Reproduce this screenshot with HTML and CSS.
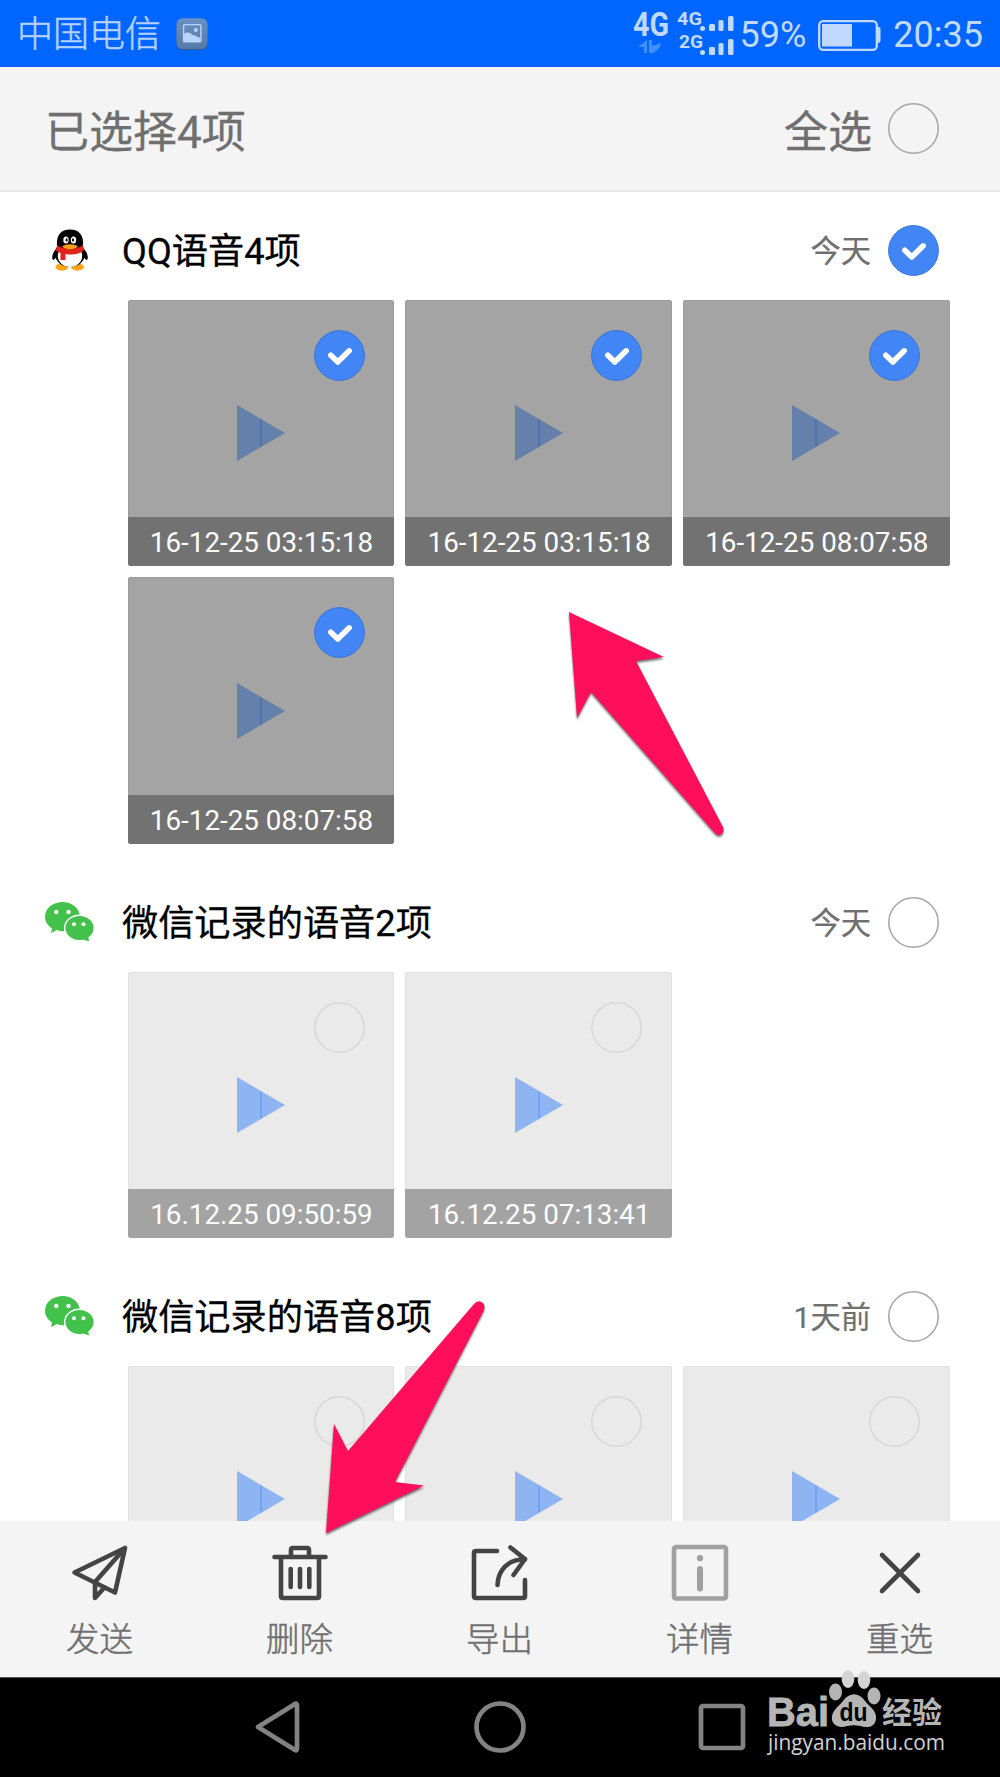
FILE: index.html
```html
<!DOCTYPE html>
<html lang="zh-CN">
<head>
<meta charset="utf-8">
<meta name="viewport" content="width=device-width">
<title>已选择4项</title>
<link rel="stylesheet" href="styles.css">
</head>
<body>
<svg class="defs" width="0" height="0">
  <symbol id="play" viewBox="0 0 48 56"><path d="M0 0L48 28L0 56Z"/><path class="play-line" d="M24 14.5V41.5"/></symbol>
  <symbol id="ring" viewBox="0 0 51 51"><circle class="ring-line" cx="25.5" cy="25.5" r="24.7"/></symbol>
  <symbol id="checked" viewBox="0 0 51 51"><circle class="disc" cx="25.5" cy="25.5" r="24.9"/><path class="tick" d="M16.8 25.2L23.8 32L35.2 20.8"/></symbol>
  <symbol id="wechat" viewBox="0 0 50 50">
    <path d="M18 5C7.500 5 0 11.500 0 20C0 25 3 28.500 7 31.500L6 36L12 33C15 34.500 18 34.500 21 34L35 18C33 10 26 5 18 5Z"/>
    <ellipse class="rim" cx="34.500" cy="31" rx="14.800" ry="12.700"/>
    <path d="M37 42L44 44.500L43 39Z"/>
    <g fill="#fff"><circle cx="11.300" cy="15" r="2.200"/><circle cx="23.500" cy="15" r="2.200"/><circle cx="29" cy="27.200" r="2"/><circle cx="38.500" cy="27.200" r="2"/></g>
  </symbol>
</svg>
<div class="screen">
  <div class="status">
    <span class="carrier">中国电信</span>
    <svg class="shot" viewBox="0 0 32 32"><defs><linearGradient id="tile" x2="0" y2="1"><stop stop-color="#6a91c4"/><stop offset="1" stop-color="#557aa8"/></linearGradient></defs><rect x=".5" y="1" width="31" height="31" rx="6" fill="#365d91"/><rect x=".5" y=".3" width="31" height="30.600" rx="6" fill="url(#tile)"/><rect x="7.600" y="6.600" width="17.300" height="17.300" rx="1" fill="none" stroke="#b9d4fb" stroke-width="1.400"/><path d="M8 16C11 14 14 14 16 17C18 16.500 22 19 24.500 20V24H8Z" fill="#b9d4fb"/><circle cx="19.800" cy="12" r="2" fill="#b9d4fb"/></svg>
    <svg class="signal" viewBox="0 0 102 46">
      <text class="net" x="0" y="26" font-size="33" textLength="36" lengthAdjust="spacingAndGlyphs">4G</text>
      <path fill="#428eff" d="M6 36L14 30V43H11V37H6ZM16 30H19V36L28 33C28 37 24 41 20 43H16Z"/>
      <text class="net" x="44" y="15" font-size="18" textLength="25" lengthAdjust="spacingAndGlyphs">4G</text>
      <text class="net" x="46" y="38" font-size="18" textLength="24" lengthAdjust="spacingAndGlyphs">2G</text>
      <rect x="67" y="16" width="5" height="5" rx="2.500"/><rect x="76" y="14" width="6" height="7" rx="1.500"/><rect x="85.500" y="10" width="5" height="11" rx="1.500"/><rect x="95" y="6" width="5.500" height="15" rx="1.500"/>
      <rect x="67" y="40" width="5" height="5" rx="2.500"/><rect x="76" y="37" width="6" height="8" rx="1.500"/><rect x="85.500" y="33" width="5" height="12" rx="1.500"/><rect x="95" y="29" width="5.500" height="16" rx="1.500"/>
    </svg>
    <span class="percent">59%</span>
    <svg class="battery" viewBox="0 0 63 31"><rect x="1.200" y="1.200" width="57.600" height="28.600" rx="4" fill="none" stroke="#c1d9ff" stroke-width="2.300"/><rect x="4" y="4" width="30" height="22.500"/><path d="M59 7H61Q62.500 7 62.500 9V21Q62.500 23 60 23H59Z"/></svg>
    <span class="clock">20:35</span>
  </div>
  <header class="topbar">
    <h1>已选择4项</h1>
    <span class="all">全选</span>
    <svg class="mark"><use href="#ring"/></svg>
  </header>
  <main class="list">
    <section class="group">
      <div class="head">
        <svg class="app" viewBox="0 0 50 50">
          <ellipse cx="17" cy="42" rx="6.500" ry="3.700" fill="#faa51a"/><ellipse cx="32.500" cy="42" rx="6.500" ry="3.700" fill="#faa51a"/>
          <path d="M12 23C8 26 6 33 8 35C9.500 35 11 32 12 31ZM38 23C42 26 44 33 42 35C40.500 35 39 32 38 31Z"/>
          <ellipse cx="25" cy="29" rx="15" ry="13"/>
          <ellipse cx="25" cy="31" rx="12.200" ry="11" fill="#fff"/>
          <path d="M12 21C11 10 16 4.500 25 4.500S39 10 38 21C33 27 17 27 12 21Z"/>
          <path d="M12 20C18 25 32 25 38 20L39 25C34 30 27 30 20.500 29V35H15.500V28L11 26Z" fill="#e2231a"/>
          <ellipse cx="21" cy="15" rx="2.700" ry="3.600" fill="#fff"/><ellipse cx="28.500" cy="15" rx="2.700" ry="3.600" fill="#fff"/><ellipse cx="21.700" cy="15" rx="1" ry="1.800"/><ellipse cx="28" cy="15" rx="1" ry="1.800"/>
          <path d="M17 21.500C21 18.500 29 18.500 33 21.500C29 25 21 25 17 21.500Z" fill="#f8a01b"/>
        </svg>
        <h2>QQ语音4项</h2><span class="day">今天</span><svg class="mark"><use href="#checked"/></svg>
      </div>
      <div class="cards">
        <div class="card on"><svg class="play"><use href="#play"/></svg><svg class="pick"><use href="#checked"/></svg><span class="time">16-12-25 03:15:18</span></div>
        <div class="card on"><svg class="play"><use href="#play"/></svg><svg class="pick"><use href="#checked"/></svg><span class="time">16-12-25 03:15:18</span></div>
        <div class="card on"><svg class="play"><use href="#play"/></svg><svg class="pick"><use href="#checked"/></svg><span class="time">16-12-25 08:07:58</span></div>
        <div class="card on"><svg class="play"><use href="#play"/></svg><svg class="pick"><use href="#checked"/></svg><span class="time">16-12-25 08:07:58</span></div>
      </div>
    </section>
    <section class="group">
      <div class="head"><svg class="app wechat"><use href="#wechat"/></svg><h2>微信记录的语音2项</h2><span class="day">今天</span><svg class="mark"><use href="#ring"/></svg></div>
      <div class="cards">
        <div class="card"><svg class="play"><use href="#play"/></svg><svg class="pick"><use href="#ring"/></svg><span class="time">16.12.25 09:50:59</span></div>
        <div class="card"><svg class="play"><use href="#play"/></svg><svg class="pick"><use href="#ring"/></svg><span class="time">16.12.25 07:13:41</span></div>
      </div>
    </section>
    <section class="group">
      <div class="head"><svg class="app wechat"><use href="#wechat"/></svg><h2>微信记录的语音8项</h2><span class="day">1天前</span><svg class="mark"><use href="#ring"/></svg></div>
      <div class="cards">
        <div class="card"><svg class="play"><use href="#play"/></svg><svg class="pick"><use href="#ring"/></svg></div>
        <div class="card"><svg class="play"><use href="#play"/></svg><svg class="pick"><use href="#ring"/></svg></div>
        <div class="card"><svg class="play"><use href="#play"/></svg><svg class="pick"><use href="#ring"/></svg></div>
      </div>
    </section>
  </main>
  <footer class="tools">
    <div class="tool"><svg class="icon" viewBox="0 0 56 56"><path d="M53 3L2.500 27.500L43 47.500Z M53 3L23 37V53L32 43"/></svg><span>发送</span></div>
    <div class="tool"><svg class="icon" viewBox="0 0 56 56"><path d="M2.500 12H53.500M19 11V5Q19 3 21 3H35Q37 3 37 5V11M9 13V51Q9 53 11 53H45Q47 53 47 51V13M18.700 24V42M28 24V42M37.300 24V42"/></svg><span>删除</span></div>
    <div class="tool"><svg class="icon" viewBox="0 0 56 56"><path d="M25 6H4Q2 6 2 8V51Q2 53 4 53H51Q53 53 53 51V35M25.500 40C26 26 35 14 53 14.500M38.500 2.500L53 14L41.500 30"/></svg><span>导出</span></div>
    <div class="tool"><svg class="icon muted" viewBox="0 0 56 56"><rect x="2" y="2" width="52" height="51.500" rx="2"/><path d="M28 24V43.500" stroke-width="6"/><circle class="dot" cx="28" cy="13.200" r="3.100"/></svg><span>详情</span></div>
    <div class="tool"><svg class="icon" viewBox="0 0 56 56"><path d="M10 10L46 46M46 10L10 46"/></svg><span>重选</span></div>
  </footer>
  <nav class="nav">
    <svg class="key" viewBox="0 0 52 52"><path d="M6 26L43 3Q45 2 45 5V47Q45 50 43 49L6 26Z"/></svg>
    <svg class="key" viewBox="0 0 52 52"><circle cx="26" cy="26" r="23.500"/></svg>
    <svg class="key" viewBox="0 0 52 52"><rect x="5" y="5" width="42" height="42" rx="2"/></svg>
  </nav>
  <svg class="pointer up" viewBox="0 0 220 270"><path d="M29 22L124 67L96 71L183 237Q185 243 180 245Q177 246 174 242L51 102L37 128Z"/></svg>
  <svg class="pointer down" viewBox="0 0 220 280"><path d="M26 263L34 154L48 181L174 34Q178 29 183 33Q186 36 183 42L95 212L124 215.500Z"/></svg>
  <svg class="brand" viewBox="0 0 180 90">
    <g><ellipse cx="67.500" cy="23" rx="6.500" ry="8.500"/><ellipse class="high" cx="80" cy="10" rx="6.300" ry="9"/><ellipse class="high" cx="96" cy="11" rx="6.300" ry="9"/><ellipse cx="106" cy="27" rx="6.500" ry="8.500"/><path d="M75 32C81 23 91 23 97 32C102 38 109 42 108 50C107 59 98 59 92 57Q86 55.500 79 57C73 59 66 58 64 51C63 42 70 38 75 32Z"/></g>
    <text class="latin" x="-1" y="57" font-size="41" textLength="62" lengthAdjust="spacingAndGlyphs">Bai</text>
    <text class="du" x="71.500" y="52" font-size="26" textLength="28" lengthAdjust="spacingAndGlyphs">du</text>
    <text class="han" x="114" y="54" font-size="30" textLength="60" lengthAdjust="spacingAndGlyphs">经验</text>
    <text class="site" x="0" y="80.500" font-size="22" textLength="177" lengthAdjust="spacingAndGlyphs">jingyan.baidu.com</text>
  </svg>
</div>
</body>
</html>
```
FILE: styles.css
```css
* { box-sizing: border-box; }
body { margin: 0; background: #fff; font-family: Roboto, "Noto Sans CJK SC", sans-serif; }
.defs { position: absolute; }
h1, h2 { margin: 0; font-weight: 400; }
svg { display: block; flex: none; overflow: visible; }
.screen { position: relative; width: 1000px; height: 1777px; display: flex; flex-direction: column; overflow: hidden; }

.status { height: 67px; flex: none; background: #06f; color: #c1d9ff; fill: #c1d9ff; display: flex; align-items: center; padding: 0 17px 0 17px; font-size: 36px; line-height: 67px; white-space: nowrap; }
.carrier { font-size: 36px; font-weight: 300; color: #b4d1ff; padding-top: 3px; -webkit-text-stroke: .5px #b4d1ff; }
.shot { width: 32px; height: 32px; margin-left: 15px; }
.signal { width: 102px; height: 46px; margin-left: auto; margin-top: -2px; }
.net { font-family: Roboto, sans-serif; font-weight: 700; }
.percent { margin-left: 5px; padding-top: 3px; }
.battery { width: 63px; height: 31px; margin: 3px 12px 0 12px; }
.clock { padding-top: 3px; }

.topbar { height: 125px; flex: none; background: #f4f4f4; border-bottom: 2px solid #e7e7e7; display: flex; align-items: center; padding: 0 61px 0 45px; color: #6f6f6f; font-size: 44px; }
.topbar h1 { font-size: 44px; margin-right: auto; }
.all { margin-right: 16px; }
.topbar h1, .all { -webkit-text-stroke: .3px #6f6f6f; }
.mark { width: 51px; height: 51px; }
.ring-line { fill: none; stroke: #a9a9a9; stroke-width: 1.6px; }
.disc { fill: #4285f4; stroke: #3974d6; stroke-width: 1px; }
.tick { fill: none; stroke: #fff; stroke-width: 5.5px; stroke-linecap: round; stroke-linejoin: round; }

.list { flex: 1; min-height: 0; overflow: hidden; padding-top: 32.5px; }
.group { height: 394.3px; padding: 0 50px 0 45px; }
.group:first-child { height: 672px; }
.head { height: 75px; padding: 0 11px 24px 0; display: flex; align-items: center; }
.app { width: 50px; height: 50px; }
.wechat { fill: #43c24b; }
.rim { stroke: #fff; stroke-width: 1.5px; }
.head h2 { margin-left: 27px; margin-right: auto; font-size: 36.2px; line-height: 50px; padding-top: 3px; -webkit-text-stroke: .3px #000; }
.day { font-size: 30.3px; line-height: 50px; color: #6f6f6f; margin-right: 17px; padding-top: 3px; -webkit-text-stroke: .2px #6f6f6f; }
.cards { display: grid; grid-template-columns: repeat(3, 266.7px); gap: 11px; margin-left: 82.6px; }
.card { position: relative; height: 266.7px; padding-top: 105.5px; border-radius: 3px; color: #70a2f5; background: #eaeaea; box-shadow: inset 0 0 0 1px #e1e1e1; display: flex; flex-direction: column; justify-content: space-between; overflow: hidden; }
.play { width: 48px; height: 56px; margin-left: 109.4px; fill: #8eb4f2; }
.play-line { fill: none; stroke: currentColor; stroke-width: 2px; }
.pick { position: absolute; top: 30px; right: 29.5px; width: 51px; height: 51px; opacity: .28; }
.time { height: 49px; line-height: 51px; text-align: center; padding-left: 1px; font-size: 27.8px; color: #fff; background: #a3a3a3; }
.on { color: #4e72ab; background: #a4a4a4; box-shadow: inset 0 0 0 1px #9c9c9c; }
.on .play { fill: #6480ab; }
.on .pick { opacity: 1; }
.on .time { background: #727272; }

.tools { height: 156px; flex: none; background: #f4f4f4; display: grid; grid-template-columns: repeat(5, 1fr); padding-top: 24px; }
.tool { display: flex; flex-direction: column; align-items: center; gap: 15px; font-size: 33.5px; line-height: 48px; font-weight: 300; color: #6f6f6f; -webkit-text-stroke: .5px #6f6f6f; }
.tool span { margin-left: -1px; }
.icon { width: 56px; height: 56px; fill: none; stroke: #444; stroke-width: 4.6px; stroke-linecap: round; stroke-linejoin: round; }
.muted { stroke: #a0a0a0; }
.dot { fill: #a0a0a0; stroke: none; }
.nav { height: 100px; flex: none; background: #000; border-top: 1px solid #555; display: flex; justify-content: center; gap: 170px; padding-top: 23px; }
.key { width: 52px; height: 52px; fill: none; stroke: #838383; stroke-width: 4.7px; stroke-linejoin: round; }

.pointer { position: absolute; width: 220px; fill: #ff0f5b; filter: drop-shadow(0 2px 1px rgba(0, 0, 0, .55)); }
.up { left: 540px; top: 590px; height: 270px; }
.down { left: 300px; top: 1270px; height: 280px; }
.brand { position: absolute; left: 768px; top: 1669px; width: 180px; height: 90px; fill: #b5b5b5; }
.high { fill: #d4d4d4; }
.latin { font-family: "Liberation Sans", sans-serif; font-weight: 700; stroke: #b5b5b5; stroke-width: .8px; }
.du { font-family: "Liberation Sans", sans-serif; font-weight: 700; fill: #000; }
.han { font-family: "Noto Sans CJK SC", sans-serif; font-weight: 700; }
.site { font-family: "Open Sans", "Noto Sans", sans-serif; fill: #d2d2d2; }
```
